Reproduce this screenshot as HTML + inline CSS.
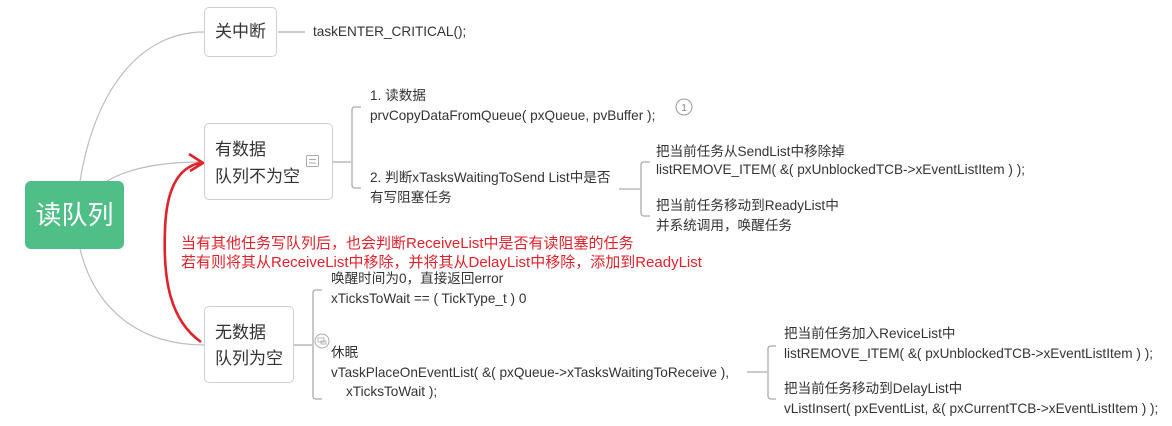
<!DOCTYPE html>
<html><head><meta charset="utf-8"><style>
body{margin:0;width:1172px;height:426px;background:#fff;position:relative;overflow:hidden;font-family:"Liberation Sans","Noto Sans CJK SC",sans-serif;}
.t{position:absolute;font-size:13.6px;color:#333;white-space:nowrap;line-height:20px;}
.box{position:absolute;border:1px solid #cfcfcf;border-radius:5px;background:#fff;box-sizing:border-box;}
.n{position:absolute;font-size:17px;color:#333;white-space:nowrap;line-height:26px;}
.r{position:absolute;font-size:15px;color:#e0222a;white-space:nowrap;line-height:19px;}
</style></head><body>
<svg width="1172" height="426" style="position:absolute;left:0;top:0" fill="none">
<g stroke="#bdbdbd" stroke-width="1.2">
<path d="M80 181 C95 90 140 32 204 32"/>
<path d="M107 181 C130 168 160 162 204 162"/>
<path d="M80 249 C95 310 140 345 204 345"/>
</g>
<g stroke="#aaa" stroke-width="1.3">
<path d="M278 32 H305"/>
<path d="M333 162 H351"/>
<path d="M361 107 H355 Q352 107 352 110 V185 Q352 188 355 188 H361"/>
<path d="M619 189 H640"/>
<path d="M650 162 H644 Q641 162 641 165 V213 Q641 216 644 216 H650"/>
<path d="M294 345 H312"/>
<path d="M322 290 H316 Q313 290 313 293 V396 Q313 399 316 399 H322"/>
<path d="M747 372 H767"/>
<path d="M776 346 H771 Q768 346 768 349 V396 Q768 399 771 399 H776"/>
</g>
<circle cx="684" cy="107" r="8" stroke="#999" stroke-width="1"/>
<text x="684" y="111" font-size="10" fill="#888" text-anchor="middle" font-family="Liberation Sans">1</text>
<circle cx="322" cy="341" r="7" stroke="#aaa" stroke-width="1" fill="#fff"/>
<rect x="318" y="338" width="6" height="4" stroke="#aaa" stroke-width="0.8"/>
<rect x="321" y="341" width="5" height="3" stroke="#aaa" stroke-width="0.8"/>
<path d="M201 342 C170 320 163 280 165 230 C166 195 175 168 200 163" stroke="#e0222a" stroke-width="2.6"/>
<path d="M189 154 L203 163 L190 171" stroke="#e0222a" stroke-width="2.6"/>
</svg>
<div style="position:absolute;left:25px;top:181px;width:99px;height:68px;background:#4fbe87;border-radius:6px;color:#fff;font-size:26px;line-height:68px;text-align:center">读队列</div>
<div class="box" style="left:204px;top:7px;width:73px;height:50px"></div>
<div class="n" style="left:215px;top:19px">关中断</div>
<div class="t" style="left:313px;top:22px">taskENTER_CRITICAL();</div>
<div class="box" style="left:204px;top:123px;width:129px;height:77px"></div>
<div class="n" style="left:215px;top:137px">有数据</div>
<div class="n" style="left:215px;top:164px">队列不为空</div>
<svg style="position:absolute;left:305px;top:153px" width="16" height="16" fill="none" stroke="#aaa" stroke-width="1"><rect x="1.5" y="2.5" width="12" height="11" rx="1"/><path d="M4 6.5H11M4 10H11"/></svg>
<div class="t" style="left:370px;top:86px">1. 读数据</div>
<div class="t" style="left:370px;top:106px">prvCopyDataFromQueue( pxQueue, pvBuffer );</div>
<div class="t" style="left:370px;top:168px">2. 判断xTasksWaitingToSend List中是否</div>
<div class="t" style="left:370px;top:188px">有写阻塞任务</div>
<div class="t" style="left:656px;top:142px">把当前任务从SendList中移除掉</div>
<div class="t" style="left:656px;top:160px">listREMOVE_ITEM( &amp;( pxUnblockedTCB-&gt;xEventListItem ) );</div>
<div class="t" style="left:656px;top:196px">把当前任务移动到ReadyList中</div>
<div class="t" style="left:656px;top:216px">并系统调用，唤醒任务</div>
<div class="r" style="left:181px;top:234px">当有其他任务写队列后，也会判断ReceiveList中是否有读阻塞的任务</div>
<div class="r" style="left:181px;top:253px">若有则将其从ReceiveList中移除，并将其从DelayList中移除，添加到ReadyList</div>
<div class="box" style="left:204px;top:306px;width:90px;height:77px"></div>
<div class="n" style="left:215px;top:320px">无数据</div>
<div class="n" style="left:215px;top:346px">队列为空</div>
<div class="t" style="left:331px;top:269px">唤醒时间为0，直接返回error</div>
<div class="t" style="left:331px;top:289px">xTicksToWait == ( TickType_t ) 0</div>
<div class="t" style="left:331px;top:343px">休眠</div>
<div class="t" style="left:331px;top:363px">vTaskPlaceOnEventList( &amp;( pxQueue-&gt;xTasksWaitingToReceive ),</div>
<div class="t" style="left:346px;top:382px">xTicksToWait );</div>
<div class="t" style="left:784px;top:324px">把当前任务加入ReviceList中</div>
<div class="t" style="left:784px;top:344px">listREMOVE_ITEM( &amp;( pxUnblockedTCB-&gt;xEventListItem ) );</div>
<div class="t" style="left:784px;top:379px">把当前任务移动到DelayList中</div>
<div class="t" style="left:784px;top:399px">vListInsert( pxEventList, &amp;( pxCurrentTCB-&gt;xEventListItem ) );</div>
</body></html>
